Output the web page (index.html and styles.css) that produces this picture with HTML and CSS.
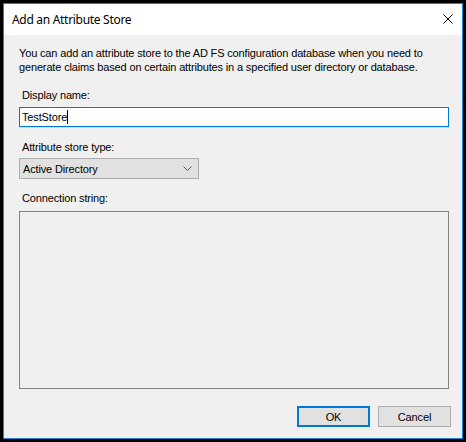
FILE: index.html
```html
<!DOCTYPE html>
<html>
<head>
<meta charset="utf-8">
<link rel="stylesheet" href="styles.css">
</head>
<body>
<div class="frame">
  <div class="window">
    <div class="titlebar">
      <span class="title">Add an Attribute Store</span>
      <svg class="close" width="10" height="10" viewBox="0 0 10 10"><path d="M0.5 0.5 L9.5 9.5 M9.5 0.5 L0.5 9.5" stroke="#000" stroke-width="1" fill="none"/></svg>
    </div>
    <div class="content">
      <p class="desc">You can add an attribute store to the AD FS configuration database when you need to<br>generate claims based on certain attributes in a specified user directory or database.</p>
      <label class="label first">Display name:</label>
      <div class="input"><span>TestStore</span><span class="caret"></span></div>
      <label class="label second">Attribute store type:</label>
      <div class="select"><span>Active Directory</span>
        <svg class="chev" width="9" height="5" viewBox="0 0 9 5"><path d="M0.5 0.5 L4.5 4.5 L8.5 0.5" stroke="#555" stroke-width="1" fill="none"/></svg>
      </div>
      <label class="label third">Connection string:</label>
      <div class="textarea"></div>
      <div class="buttons">
        <div class="btn ok">OK</div>
        <div class="btn">Cancel</div>
      </div>
    </div>
  </div>
</div>
</body>
</html>
```
FILE: styles.css
```css
html, body {
  margin: 0;
  padding: 0;
  background: #000;
}
.frame {
  width: 466px;
  height: 442px;
  box-sizing: border-box;
  padding: 3px;
  background: #000;
}
.window {
  height: 100%;
  box-sizing: border-box;
  border: 1px solid #1883d7;
  display: flex;
  flex-direction: column;
  background: #f0f0f0;
  font-family: "Liberation Sans", Arial, sans-serif;
  font-size: 11px;
  letter-spacing: -0.15px;
  color: #000;
}
.titlebar {
  height: 31px;
  background: #fff;
  display: flex;
  align-items: center;
  justify-content: space-between;
  padding: 0 9px 0 8px;
  flex-shrink: 0;
}
.title {
  font-family: "Noto Sans", "Open Sans", sans-serif;
  font-size: 12px;
  letter-spacing: -0.3px;
  margin-top: -1px;
}
.close {
  display: block;
  margin-top: -1px;
}
.content {
  flex: 1;
  display: flex;
  flex-direction: column;
  padding: 11px 13px 11px 15px;
}
.desc {
  margin: 0;
  line-height: 14px;
  white-space: nowrap;
}
.label {
  display: block;
  line-height: 14px;
  padding-left: 3px;
}
.label.first { margin-top: 14px; }
.label.second { margin-top: 13px; }
.label.third { margin-top: 12px; }
.input {
  margin-top: 5px;
  height: 20px;
  box-sizing: border-box;
  border: 1px solid #0078d7;
  background: #fff;
  display: flex;
  align-items: center;
  padding-left: 2px;
  box-shadow: 0 1px 0 #c6dcf0;
}
.caret {
  width: 1px;
  height: 14px;
  background: #000;
}
.select {
  margin-top: 4px;
  width: 180px;
  height: 21px;
  box-sizing: border-box;
  border: 1px solid #adadad;
  background: #e1e1e1;
  display: flex;
  align-items: center;
  justify-content: space-between;
  padding: 0 6px 0 3px;
}
.chev { display: block; }
.textarea {
  margin-top: 6px;
  flex: 1;
  border: 1px solid #828282;
  background: #f0f0f0;
}
.buttons {
  margin-top: 17px;
  display: flex;
  justify-content: flex-end;
  gap: 8px;
  margin-right: -2px;
}
.btn {
  width: 73px;
  height: 21px;
  box-sizing: border-box;
  border: 1px solid #adadad;
  background: #e1e1e1;
  display: flex;
  align-items: center;
  justify-content: center;
}
.btn.ok {
  border: 2px solid #0078d7;
}
```
